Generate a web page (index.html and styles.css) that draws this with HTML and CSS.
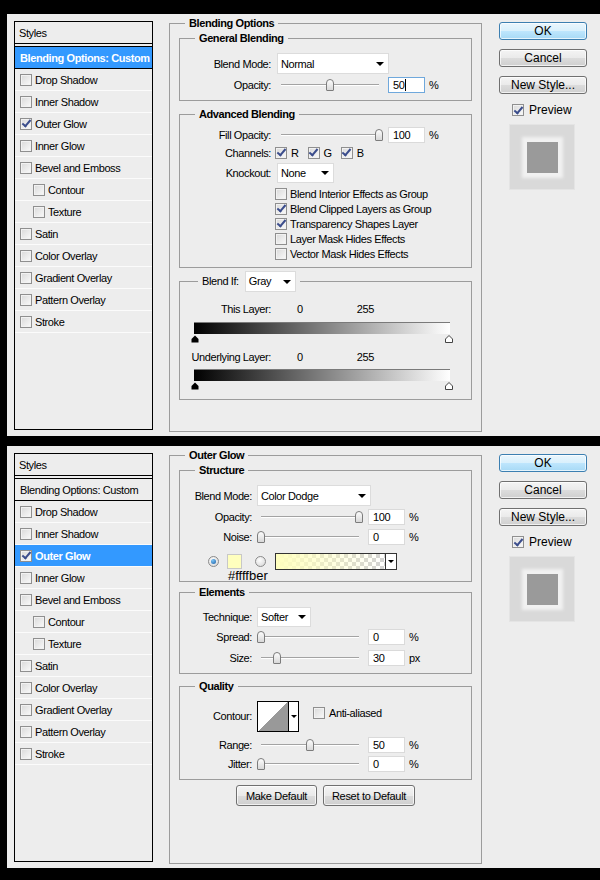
FILE: index.html
```html
<!DOCTYPE html>
<html lang="en">
<head>
    <meta charset="UTF-8">
    <title>Layer Style</title>
    <link rel="stylesheet" href="styles.css">
</head>
<body>
    <!-- Blending options page -->
    <div class="dialog">
        <ul class="style-list">
            <li class="list-head">Styles</li>
            <li class="blend-row selected">Blending Options: Custom</li>
            <li><span class="cb"></span>Drop Shadow</li>
            <li><span class="cb"></span>Inner Shadow</li>
            <li><span class="cb on"></span>Outer Glow</li>
            <li><span class="cb"></span>Inner Glow</li>
            <li><span class="cb"></span>Bevel and Emboss</li>
            <li class="sub"><span class="cb"></span>Contour</li>
            <li class="sub"><span class="cb"></span>Texture</li>
            <li><span class="cb"></span>Satin</li>
            <li><span class="cb"></span>Color Overlay</li>
            <li><span class="cb"></span>Gradient Overlay</li>
            <li><span class="cb"></span>Pattern Overlay</li>
            <li><span class="cb"></span>Stroke</li>
        </ul>

        <fieldset class="settings">
            <legend>Blending Options</legend>

            <fieldset class="group general">
                <legend>General Blending</legend>
                <div class="row r-select">
                    <span class="lbl">Blend Mode:</span>
                    <span class="select w-mode">Normal</span>
                </div>
                <div class="row r-num">
                    <span class="lbl">Opacity:</span>
                    <span class="slider"><span class="track"><span class="thumb" style="left:50%"></span></span></span>
                    <span class="num focused">50<i class="caret"></i></span>
                    <span class="unit">%</span>
                </div>
            </fieldset>

            <fieldset class="group advanced">
                <legend>Advanced Blending</legend>
                <div class="row r-num first">
                    <span class="lbl">Fill Opacity:</span>
                    <span class="slider"><span class="track"><span class="thumb" style="left:100%"></span></span></span>
                    <span class="num">100</span>
                    <span class="unit">%</span>
                </div>
                <div class="row r-chan">
                    <span class="lbl tight">Channels:</span>
                    <span class="chan"><span class="cb on"></span>R</span>
                    <span class="chan"><span class="cb on"></span>G</span>
                    <span class="chan"><span class="cb on"></span>B</span>
                </div>
                <div class="row r-knock">
                    <span class="lbl">Knockout:</span>
                    <span class="select w-knock">None</span>
                </div>
                <div class="opts">
                    <div class="opt"><span class="cb"></span>Blend Interior Effects as Group</div>
                    <div class="opt"><span class="cb on"></span>Blend Clipped Layers as Group</div>
                    <div class="opt"><span class="cb on"></span>Transparency Shapes Layer</div>
                    <div class="opt"><span class="cb"></span>Layer Mask Hides Effects</div>
                    <div class="opt"><span class="cb"></span>Vector Mask Hides Effects</div>
                </div>
            </fieldset>

            <fieldset class="group blend-if">
                <legend>Blend If: <span class="select w-gray">Gray</span></legend>
                <div class="row r-range">
                    <span class="lbl">This Layer:</span>
                    <span class="lo">0</span>
                    <span class="hi">255</span>
                </div>
                <div class="ramp"></div>
                <div class="stops">
                    <svg width="8" height="8" viewBox="0 0 8 8"><path d="M4 .5 7.5 4v3.5H.5V4z" fill="#000"/></svg>
                    <svg width="8" height="8" viewBox="0 0 8 8"><path d="M4 .5 7.5 4v3.5H.5V4z" fill="#fff" stroke="#444"/></svg>
                </div>
                <div class="row r-range second">
                    <span class="lbl">Underlying Layer:</span>
                    <span class="lo">0</span>
                    <span class="hi">255</span>
                </div>
                <div class="ramp"></div>
                <div class="stops">
                    <svg width="8" height="8" viewBox="0 0 8 8"><path d="M4 .5 7.5 4v3.5H.5V4z" fill="#000"/></svg>
                    <svg width="8" height="8" viewBox="0 0 8 8"><path d="M4 .5 7.5 4v3.5H.5V4z" fill="#fff" stroke="#444"/></svg>
                </div>
            </fieldset>
        </fieldset>

        <div class="actions">
            <button class="btn default">OK</button>
            <button class="btn">Cancel</button>
            <button class="btn">New Style...</button>
            <label class="preview-toggle"><span class="cb on"></span>Preview</label>
            <div class="preview"><span class="glow-square"></span></div>
        </div>
    </div>

    <!-- Outer glow page -->
    <div class="dialog glow-page">
        <ul class="style-list">
            <li class="list-head">Styles</li>
            <li class="blend-row">Blending Options: Custom</li>
            <li><span class="cb"></span>Drop Shadow</li>
            <li><span class="cb"></span>Inner Shadow</li>
            <li class="selected"><span class="cb on"></span>Outer Glow</li>
            <li><span class="cb"></span>Inner Glow</li>
            <li><span class="cb"></span>Bevel and Emboss</li>
            <li class="sub"><span class="cb"></span>Contour</li>
            <li class="sub"><span class="cb"></span>Texture</li>
            <li><span class="cb"></span>Satin</li>
            <li><span class="cb"></span>Color Overlay</li>
            <li><span class="cb"></span>Gradient Overlay</li>
            <li><span class="cb"></span>Pattern Overlay</li>
            <li><span class="cb"></span>Stroke</li>
        </ul>

        <fieldset class="settings">
            <legend>Outer Glow</legend>

            <fieldset class="group structure">
                <legend>Structure</legend>
                <div class="row r-select">
                    <span class="lbl">Blend Mode:</span>
                    <span class="select w-dodge">Color Dodge</span>
                </div>
                <div class="row r-num">
                    <span class="lbl">Opacity:</span>
                    <span class="slider"><span class="track"><span class="thumb" style="left:100%"></span></span></span>
                    <span class="num">100</span>
                    <span class="unit">%</span>
                </div>
                <div class="row r-num">
                    <span class="lbl">Noise:</span>
                    <span class="slider"><span class="track"><span class="thumb" style="left:0%"></span></span></span>
                    <span class="num">0</span>
                    <span class="unit">%</span>
                </div>
                <div class="row r-color">
                    <span class="radio on"></span>
                    <span class="swatch"></span>
                    <span class="radio"></span>
                    <span class="grad"><span class="grad-ramp"></span><span class="drop"></span></span>
                </div>
                <div class="hex">#ffffber</div>
            </fieldset>

            <fieldset class="group elements">
                <legend>Elements</legend>
                <div class="row r-knock">
                    <span class="lbl">Technique:</span>
                    <span class="select w-tech">Softer</span>
                </div>
                <div class="row r-num first">
                    <span class="lbl">Spread:</span>
                    <span class="slider"><span class="track"><span class="thumb" style="left:0%"></span></span></span>
                    <span class="num">0</span>
                    <span class="unit">%</span>
                </div>
                <div class="row r-num size">
                    <span class="lbl">Size:</span>
                    <span class="slider"><span class="track"><span class="thumb" style="left:16%"></span></span></span>
                    <span class="num">30</span>
                    <span class="unit">px</span>
                </div>
            </fieldset>

            <fieldset class="group quality">
                <legend>Quality</legend>
                <div class="row r-contour">
                    <span class="lbl">Contour:</span>
                    <span class="contour"><span class="curve"></span><span class="drop"></span></span>
                    <span class="alias"><span class="cb"></span>Anti-aliased</span>
                </div>
                <div class="row r-num range">
                    <span class="lbl">Range:</span>
                    <span class="slider"><span class="track"><span class="thumb" style="left:50%"></span></span></span>
                    <span class="num">50</span>
                    <span class="unit">%</span>
                </div>
                <div class="row r-num first">
                    <span class="lbl">Jitter:</span>
                    <span class="slider"><span class="track"><span class="thumb" style="left:0%"></span></span></span>
                    <span class="num">0</span>
                    <span class="unit">%</span>
                </div>
            </fieldset>

            <div class="btn-row">
                <button class="btn small make">Make Default</button>
                <button class="btn small reset">Reset to Default</button>
            </div>
        </fieldset>

        <div class="actions">
            <button class="btn default">OK</button>
            <button class="btn">Cancel</button>
            <button class="btn">New Style...</button>
            <label class="preview-toggle"><span class="cb on"></span>Preview</label>
            <div class="preview"><span class="glow-square"></span></div>
        </div>
    </div>
</body>
</html>
```

FILE: styles.css
```css
* {
    box-sizing: border-box;
}

body {
    margin: 0;
    padding: 14px 0 0 7px;
    background: #000;
    font-family: "Liberation Sans", Arial, sans-serif;
    font-size: 11px;
    letter-spacing: -0.4px;
    color: #000;
}

.dialog {
    display: flex;
    align-items: flex-start;
    height: 422px;
    padding: 7px 0 0 7px;
    background: #ededed;
}

.dialog + .dialog {
    margin-top: 10px;
}

/* left style list */
.style-list {
    flex: none;
    width: 139px;
    height: 409px;
    margin: 0;
    padding: 0;
    list-style: none;
    border: 1px solid #000;
}

.style-list li {
    display: flex;
    align-items: center;
    height: 22px;
    padding-left: 5px;
    border-bottom: 1px solid #fbfbfb;
}

.style-list .list-head {
    height: 22px;
    padding-left: 4px;
    border-bottom: 1px solid #000;
    margin-bottom: 2px;
}

.style-list .blend-row {
    height: 23px;
    border-top: 1px solid #000;
    border-bottom: 1px solid #000;
}

.style-list .sub {
    padding-left: 18px;
}

.style-list .selected {
    background: #3399ff;
    color: #fff;
    font-weight: bold;
}

.style-list .cb {
    margin-right: 3px;
}

/* checkboxes and radios */
.cb {
    flex: none;
    display: inline-flex;
    align-items: center;
    justify-content: center;
    width: 12px;
    height: 12px;
    border: 1px solid #8f8f8f;
    background: linear-gradient(135deg, #d9d9d9, #fafafa);
    box-shadow: inset 0 0 0 1px #f2f2f2;
}

.cb.on::after {
    content: "";
    width: 3px;
    height: 7px;
    border: solid #3b4d8c;
    border-width: 0 2px 2px 0;
    transform: translateY(-1px) rotate(40deg);
}

.radio {
    flex: none;
    display: inline-flex;
    align-items: center;
    justify-content: center;
    width: 11px;
    height: 11px;
    border: 1px solid #8a8a8a;
    border-radius: 50%;
    background: radial-gradient(circle at 40% 35%, #fdfdfd, #d4d4d4);
}

.radio.on::after {
    content: "";
    width: 5px;
    height: 5px;
    border-radius: 50%;
    background: radial-gradient(circle at 35% 30%, #7cc4f5, #1a5fa6);
}

/* settings area */
.settings {
    flex: none;
    width: 313px;
    height: 415px;
    margin: -4px 0 0 16px;
    padding: 2px 9px 0;
    border: 1px solid #9c9c9c;
    min-inline-size: 0;
}

legend {
    padding: 0 4px;
    margin-left: 6px;
    font-weight: bold;
    line-height: 13px;
}

.group {
    margin: 0;
    padding: 0 10px 6px 0;
    border: 1px solid #9c9c9c;
    min-inline-size: 0;
}

.group legend {
    margin-left: 15px;
}

.general,
.structure {
    padding-top: 8px;
}

.advanced {
    margin-top: 7px;
    padding-top: 5px;
}

.blend-if {
    margin-top: 3px;
    padding-top: 10px;
    padding-bottom: 9px;
}

.blend-if legend {
    display: flex;
    align-items: center;
    gap: 6px;
    margin-left: 18px;
    font-weight: normal;
}

.structure {
    padding-bottom: 0;
}

.elements {
    margin-top: 4px;
    padding-top: 8px;
}

.quality {
    margin-top: 6px;
    padding-top: 8px;
}

/* rows */
.row {
    display: flex;
    align-items: center;
}

.lbl {
    flex: none;
    width: 91px;
    margin-right: 6px;
    text-align: right;
}

.lbl.tight {
    margin-right: 4px;
}

.glow-page .lbl {
    width: 72px;
    margin-right: 5px;
}

.r-select {
    height: 21px;
}

.r-num {
    height: 18px;
    margin-top: 2px;
}

.r-num.first {
    margin-top: 1px;
}

.r-num.size {
    margin-top: 3px;
}

.r-num.range {
    margin-top: 5px;
}

.advanced .r-num.first {
    margin-top: 0;
}

.r-chan {
    height: 15px;
    margin-top: 1px;
}

.r-knock {
    height: 20px;
    margin-top: 3px;
}

.elements .r-knock {
    margin-top: 0;
}

.chan {
    display: flex;
    align-items: center;
    gap: 4px;
    margin-right: 9px;
}

.opts {
    margin-top: 3px;
    padding-left: 95px;
}

.opt {
    display: flex;
    align-items: center;
    gap: 3px;
    height: 15px;
}

/* drop-down boxes */
.select {
    display: flex;
    align-items: center;
    justify-content: space-between;
    height: 21px;
    padding: 0 4px 0 3px;
    background: #fff;
    border: 1px solid #dcdcdc;
    font-weight: normal;
}

.select::after {
    content: "";
    border-left: 4px solid transparent;
    border-right: 4px solid transparent;
    border-top: 4px solid #000;
}

.r-knock .select {
    height: 20px;
}

.w-mode { width: 112px; }
.w-knock { width: 57px; }
.w-gray { width: 51px; }
.w-dodge { width: 114px; }
.w-tech { width: 54px; }

/* sliders and number fields */
.slider {
    flex: none;
    display: flex;
    align-items: center;
    width: 111px;
    height: 14px;
}

.track {
    position: relative;
    width: 98px;
    height: 2px;
    margin-left: 4px;
    border-top: 1px solid #a3a3a3;
    border-bottom: 1px solid #fff;
}

.thumb {
    position: absolute;
    top: -6px;
    width: 8px;
    height: 12px;
    margin-left: -4px;
    border: 1px solid #7c7c7c;
    border-radius: 4px 4px 1px 1px;
    background: linear-gradient(#fdfdfd, #d8d8d8);
}

.num {
    display: flex;
    align-items: center;
    width: 37px;
    height: 16px;
    padding-left: 4px;
    background: #fff;
    border: 1px solid #dadada;
}

.num.focused {
    border-color: #6fa8dc;
}

.caret {
    display: inline-block;
    width: 1px;
    height: 12px;
    margin-left: 1px;
    background: #000;
}

.unit {
    margin-left: 4px;
}

/* blend if ramps */
.r-range {
    height: 14px;
}

.r-range.second {
    margin-top: 7px;
}

.lo {
    margin-left: 20px;
}

.hi {
    margin-left: 54px;
}

.ramp {
    width: 256px;
    height: 12px;
    margin: 6px 0 0 14px;
    border-top: 1px solid #7a7a7a;
    background: linear-gradient(to right, #000, #fff);
}

.r-range.second + .ramp {
    margin-top: 5px;
}

.stops {
    display: flex;
    justify-content: space-between;
    width: 262px;
    height: 8px;
    margin: 1px 0 0 11px;
}

.stops svg {
    display: block;
}

/* outer glow color */
.r-color {
    height: 17px;
    margin-top: 7px;
    padding-left: 28px;
}

.swatch {
    width: 15px;
    height: 15px;
    margin: 0 13px 0 8px;
    background: #ffffbe;
    border: 1px solid #c8c8c8;
}

.grad {
    display: flex;
    width: 122px;
    height: 17px;
    margin-left: 9px;
    border: 1px solid #333;
}

.grad-ramp {
    flex: 1;
    background:
        linear-gradient(to right, #ffffbe, rgba(255, 255, 190, 0)),
        repeating-conic-gradient(#d2d2d2 0 25%, #fff 0 50%) 0 0 / 8px 8px;
}

.drop {
    display: flex;
    align-items: center;
    justify-content: center;
    width: 11px;
    background: #fff;
    border-left: 1px solid #333;
}

.drop::after {
    content: "";
    border-left: 3px solid transparent;
    border-right: 3px solid transparent;
    border-top: 3px solid #000;
}

.hex {
    height: 11px;
    padding-left: 48px;
    font-size: 13px;
    line-height: 11px;
    letter-spacing: 0;
    white-space: nowrap;
}

/* contour */
.r-contour {
    height: 30px;
}

.contour {
    display: flex;
    width: 42px;
    height: 31px;
    border: 1px solid #000;
}

.curve {
    flex: 1;
    background: linear-gradient(to top left, #999 50%, #fff 50%);
}

.contour .drop {
    width: 10px;
    border-left-color: #000;
}

.alias {
    display: flex;
    align-items: center;
    gap: 4px;
    margin: -6px 0 0 14px;
}

/* buttons */
.btn {
    display: block;
    width: 88px;
    height: 18px;
    margin: 0 0 9px;
    padding: 0;
    font-family: "Liberation Sans", Arial, sans-serif;
    font-size: 12px;
    letter-spacing: 0;
    line-height: 14px;
    color: #000;
    border: 1px solid #707070;
    border-radius: 3px;
    background: linear-gradient(#f4f4f4 0%, #eaeaea 50%, #dcdcdc 51%, #cfcfcf 100%);
    box-shadow: inset 0 0 0 1px rgba(255, 255, 255, 0.7);
}

.btn.default {
    border-color: #3c7fb1;
    background: linear-gradient(#eaf6fd 0%, #d9f0fc 50%, #bee6fd 51%, #a7d9f5 100%);
}

.btn-row {
    display: flex;
    justify-content: center;
    gap: 6px;
    margin-top: 5px;
}

.btn.small {
    height: 21px;
    margin: 0;
    font-size: 11px;
    letter-spacing: -0.3px;
}

.btn.make { width: 81px; }
.btn.reset { width: 92px; }

/* right column */
.actions {
    flex: none;
    width: 88px;
    margin-left: 17px;
    padding-top: 1px;
}

.preview-toggle {
    display: flex;
    align-items: center;
    gap: 5px;
    height: 14px;
    padding-left: 13px;
    font-size: 12px;
    letter-spacing: 0;
}

.preview {
    display: flex;
    align-items: center;
    justify-content: center;
    width: 66px;
    height: 66px;
    margin: 7px 0 0 10px;
    background: #d9d9d9;
    border: 1px solid #e4e4e4;
}

.glow-square {
    width: 31px;
    height: 31px;
    background: #9a9a9a;
    box-shadow: 0 0 3px 5px #f1f1f1;
}
```
